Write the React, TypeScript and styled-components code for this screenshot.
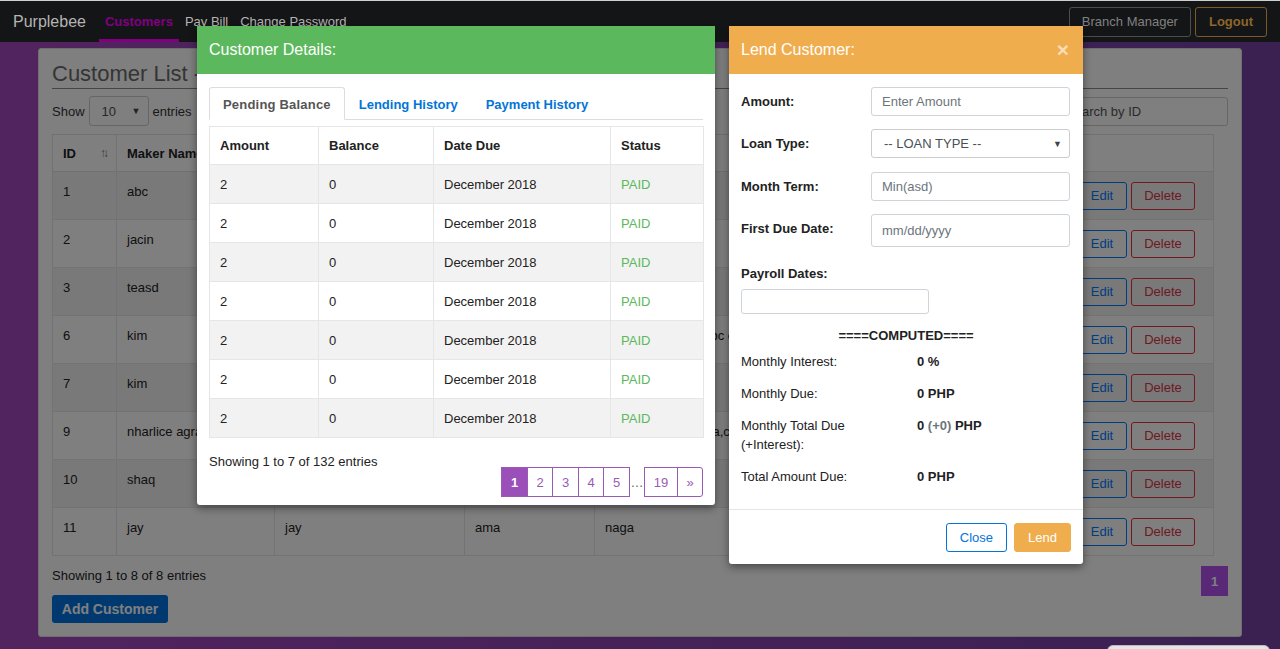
import React from 'react';
import styled, { createGlobalStyle } from 'styled-components';

const GlobalStyle = createGlobalStyle`
  html, body { margin: 0; padding: 0; }
  body {
    font-family: "Liberation Sans", Arial, Helvetica, sans-serif;
    font-size: 13px;
    color: #333;
    overflow: hidden;
  }
  * { box-sizing: border-box; }
`;

const Page = styled.div`
  position: relative;
  width: 1280px;
  height: 649px;
  overflow: hidden;
  background: linear-gradient(90deg, #a448be 0%, #8c45b2 50%, #7442a4 100%);
`;

/* ---------- navbar ---------- */
const Navbar = styled.nav`
  position: relative;
  z-index: 1050;
  height: 42px;
  display: flex;
  align-items: stretch;
  background: #141517;
  border-top: 1px solid #cfcfcf;
  padding: 0 13px;
`;
const Brand = styled.div`
  display: flex;
  align-items: center;
  font-size: 16px;
  color: #b4b4b4;
  margin-right: 13px;
`;
const NavLink = styled.a<{ $active?: boolean }>`
  display: flex;
  align-items: center;
  padding: 3px 6px 0;
  font-size: 13px;
  text-decoration: none;
  color: ${(p) => (p.$active ? '#800080' : '#b4b4b4')};
  font-weight: ${(p) => (p.$active ? 700 : 400)};
  border-bottom: 3px solid ${(p) => (p.$active ? '#800080' : 'transparent')};
`;
const NavRight = styled.div`
  margin-left: auto;
  display: flex;
  align-items: center;
  gap: 4px;
`;
const NavButton = styled.button<{ $tone: 'gray' | 'gold' }>`
  height: 30px;
  padding: 0 ${(p) => (p.$tone === 'gold' ? 13 : 12)}px;
  background: transparent;
  border-radius: 3px;
  font-family: inherit;
  font-size: 13px;
  border: 1px solid ${(p) => (p.$tone === 'gold' ? '#7b5a27' : '#4c4d4f')};
  color: ${(p) => (p.$tone === 'gold' ? '#8d672c' : '#808080')};
  font-weight: ${(p) => (p.$tone === 'gold' ? 700 : 400)};
`;

/* ---------- background page ---------- */
const Container = styled.main`
  padding: 6px 38px 0;
`;
const Card = styled.section`
  background: #fff;
  border: 1px solid #ddd;
  border-radius: 3px;
  padding: 13px;
`;
const CardTitle = styled.h2`
  margin: 0 0 7px;
  font-size: 22px;
  line-height: 24px;
  font-weight: 400;
  color: #6a6a6a;
  padding-bottom: 2px;
  border-bottom: 1px solid #8a8a8a;
`;
const ToolRow = styled.div`
  display: flex;
  align-items: center;
  justify-content: space-between;
  height: 30px;
  margin-bottom: 8px;
  color: #333;
`;
const LengthWrap = styled.div`
  display: flex;
  align-items: center;
  gap: 4px;
`;
const FakeSelect = styled.div<{ $w: number; $h: number }>`
  width: ${(p) => p.$w}px;
  height: ${(p) => p.$h}px;
  display: flex;
  align-items: center;
  justify-content: space-between;
  padding: 0 7px 0 12px;
  border: 1px solid #ccc;
  border-radius: 3px;
  background: #fff;
  color: #495057;
  font-size: 13px;
`;
const Caret = styled.span`
  font-size: 9px;
  color: #444;
`;
const SearchBox = styled.input`
  width: 172px;
  height: 29px;
  border: 1px solid #ccc;
  border-radius: 3px;
  padding: 0 9px;
  font-family: inherit;
  font-size: 13px;
  &::placeholder { color: #555; }
`;
const MainTable = styled.table`
  width: 1161px;
  border-collapse: collapse;
  table-layout: fixed;
  border: 1px solid #ddd;
`;
const MainTh = styled.th`
  height: 37px;
  padding: 0 10px;
  text-align: left;
  font-weight: 700;
  font-size: 13px;
  color: #222;
  border: 1px solid #e2e2e2;
  white-space: nowrap;
  overflow: hidden;
`;
const ThInner = styled.div`
  display: flex;
  align-items: center;
  justify-content: space-between;
`;
const SortIcon = styled.span`
  font-size: 12px;
  color: #777;
  letter-spacing: -3px;
  font-weight: 400;
`;
const MainTr = styled.tr<{ $striped: boolean }>`
  height: 48px;
  background: ${(p) => (p.$striped ? '#f2f2f2' : '#fff')};
`;
const MainTd = styled.td`
  vertical-align: top;
  padding: 11px 10px 0;
  line-height: 17px;
  border: 1px solid #e6e6e6;
  color: #222;
  white-space: nowrap;
  overflow: hidden;
`;
const ActionTd = styled.td`
  vertical-align: middle;
  padding: 0 10px;
  border: 1px solid #e6e6e6;
  white-space: nowrap;
`;
const Actions = styled.div`
  display: flex;
  gap: 4px;
`;
const OutlineBtn = styled.button<{ $color: string; $w: number }>`
  width: ${(p) => p.$w}px;
  height: 28px;
  border: 1px solid ${(p) => p.$color};
  color: ${(p) => p.$color};
  background: transparent;
  border-radius: 3px;
  font-family: inherit;
  font-size: 13px;
  padding: 0;
`;
const CardFooter = styled.div`
  display: flex;
  justify-content: space-between;
  align-items: flex-start;
  margin-top: 10px;
`;
const FooterLeft = styled.div`
  display: flex;
  flex-direction: column;
  align-items: flex-start;
`;
const InfoText = styled.div`
  line-height: 20px;
  color: #222;
`;
const PrimaryBtn = styled.button`
  margin-top: 9px;
  width: 116px;
  height: 28px;
  border: none;
  border-radius: 3px;
  background: #0073de;
  color: #fff;
  font-family: inherit;
  font-weight: 700;
  font-size: 14px;
`;
const MiniPage = styled.div`
  width: 27px;
  height: 30px;
  display: flex;
  align-items: center;
  justify-content: center;
  background: #b250ee;
  color: #fff;
  font-weight: 700;
  font-size: 13px;
`;

const Backdrop = styled.div`
  position: absolute;
  inset: 0;
  z-index: 1040;
  background: rgba(0, 0, 0, 0.5);
`;

/* ---------- modals ---------- */
const Modal = styled.div<{ $left: number; $width: number }>`
  position: absolute;
  z-index: 1060;
  top: 26px;
  left: ${(p) => p.$left}px;
  width: ${(p) => p.$width}px;
  background: #fff;
  border-radius: 0 0 3px 3px;
  box-shadow: 0 3px 9px rgba(0, 0, 0, 0.45);
  display: flex;
  flex-direction: column;
`;
const ModalHeader = styled.div<{ $bg: string }>`
  height: 48px;
  display: flex;
  align-items: center;
  justify-content: space-between;
  padding: 0 12px;
  background: ${(p) => p.$bg};
  color: #fff;
  font-size: 16px;
`;
const CloseX = styled.span`
  font-size: 21px;
  font-weight: 700;
  color: rgba(255, 255, 255, 0.6);
  line-height: 1;
  margin: -2px 2px 0 0;
`;
const LeftBody = styled.div`
  padding: 13px 12px 8px;
`;
const Tabs = styled.div`
  display: flex;
  height: 33px;
  border-bottom: 1px solid #ddd;
`;
const Tab = styled.div<{ $active?: boolean }>`
  display: flex;
  align-items: center;
  padding: 1px 13px 0;
  font-weight: 700;
  font-size: 13px;
  letter-spacing: ${(p) => (p.$active ? 0.2 : 0)}px;
  color: ${(p) => (p.$active ? '#555' : '#0275d8')};
  background: ${(p) => (p.$active ? '#fff' : 'transparent')};
  border: 1px solid ${(p) => (p.$active ? '#ddd' : 'transparent')};
  border-bottom: ${(p) => (p.$active ? '1px solid #fff' : 'none')};
  border-radius: 3px 3px 0 0;
  margin-bottom: ${(p) => (p.$active ? -1 : 0)}px;
`;
const DetailTable = styled.table`
  width: 100%;
  margin-top: 6px;
  border-collapse: collapse;
  table-layout: fixed;
  border: 1px solid #e6e6e6;
`;
const DTh = styled.th`
  height: 38px;
  padding: 0 10px;
  text-align: left;
  font-weight: 700;
  font-size: 13px;
  color: #222;
  border: 1px solid #e6e6e6;
`;
const DTr = styled.tr<{ $striped: boolean }>`
  background: ${(p) => (p.$striped ? '#f2f2f2' : '#fff')};
`;
const DTd = styled.td<{ $paid?: boolean }>`
  height: 39px;
  padding: 0 10px;
  font-size: 13px;
  color: ${(p) => (p.$paid ? '#5cb85c' : '#222')};
  border: 1px solid #e6e6e6;
`;
const DetailFooter = styled.div`
  display: flex;
  justify-content: space-between;
  align-items: flex-start;
`;
const DetailInfo = styled.div`
  margin-top: 15px;
  line-height: 18px;
  color: #222;
`;
const Pager = styled.div`
  display: flex;
  margin-top: 29px;
`;
const PageItem = styled.div<{ $active?: boolean; $w?: number; $last?: boolean }>`
  width: ${(p) => p.$w ?? 26}px;
  height: 30px;
  margin-left: -1px;
  display: flex;
  align-items: center;
  justify-content: center;
  border: 1px solid #9b59b6;
  border-radius: ${(p) => (p.$last ? '0 3px 3px 0' : '0')};
  background: ${(p) => (p.$active ? '#9b4fb8' : '#fff')};
  color: ${(p) => (p.$active ? '#fff' : '#9b59b6')};
  font-weight: ${(p) => (p.$active ? 700 : 400)};
  font-size: 13px;
  position: relative;
  z-index: ${(p) => (p.$active ? 1 : 0)};
`;
const PageGap = styled.div`
  width: 14px;
  height: 30px;
  display: flex;
  align-items: flex-end;
  justify-content: center;
  padding-bottom: 7px;
  color: #666;
  margin-right: 1px;
`;

const RightBody = styled.div`
  padding: 13px 12px 23px;
`;
const FormRow = styled.div<{ $gap?: number }>`
  display: grid;
  grid-template-columns: 130px 199px;
  margin-bottom: ${(p) => p.$gap ?? 13}px;
`;
const FormLabel = styled.label<{ $block?: boolean }>`
  display: block;
  font-weight: 700;
  font-size: 13px;
  line-height: 16px;
  padding-top: ${(p) => (p.$block ? 0 : 7)}px;
  margin-bottom: ${(p) => (p.$block ? 7 : 0)}px;
  color: #222;
`;
const TextInput = styled.input<{ $h?: number; $w?: number }>`
  width: ${(p) => (p.$w ? `${p.$w}px` : '100%')};
  height: ${(p) => p.$h ?? 29}px;
  border: 1px solid #ced4da;
  border-radius: 3px;
  padding: 0 10px;
  font-family: inherit;
  font-size: 13px;
  color: #495057;
  &::placeholder { color: #6c757d; }
`;
const ComputedTitle = styled.div`
  margin-top: 14px;
  text-align: center;
  font-weight: 700;
  line-height: 16px;
  color: #222;
`;
const ComputedList = styled.div`
  margin-top: 8px;
  display: flex;
  flex-direction: column;
  gap: 13px;
`;
const ComputedRow = styled.div`
  display: grid;
  grid-template-columns: 176px 1fr;
  line-height: 19px;
  color: #222;
`;
const ComputedValue = styled.div`
  font-weight: 700;
`;
const Muted = styled.span`
  color: #6c757d;
`;
const ModalFooter = styled.div`
  display: flex;
  justify-content: flex-end;
  gap: 7px;
  padding: 13px 12px 12px;
  border-top: 1px solid #e5e5e5;
`;
const FooterBtn = styled.button<{ $kind: 'outline' | 'warning' }>`
  height: 29px;
  padding: 0 13px;
  border-radius: 3px;
  font-family: inherit;
  font-size: 13px;
  border: 1px solid ${(p) => (p.$kind === 'outline' ? '#0275d8' : '#f0ad4e')};
  background: ${(p) => (p.$kind === 'outline' ? '#fff' : '#f0ad4e')};
  color: ${(p) => (p.$kind === 'outline' ? '#0275d8' : '#fff')};
`;

const CornerTab = styled.div`
  position: absolute;
  z-index: 1070;
  left: 1107px;
  top: 645px;
  width: 163px;
  height: 30px;
  background: #e4e4e4;
  border: 1px solid #bbb;
  border-radius: 6px 6px 0 0;
`;

type Customer = { id: number; maker: string; comaker: string; contact: string; address: string; company: string };

const customers: Customer[] = [
  { id: 1, maker: 'abc', comaker: 'abc', contact: 'abc', address: 'abc', company: 'abc' },
  { id: 2, maker: 'jacin', comaker: 'jacin', contact: 'jacin', address: 'jacin', company: 'jacin' },
  { id: 3, maker: 'teasd', comaker: 'teasd', contact: 'asd', address: 'asd', company: 'asd' },
  { id: 6, maker: 'kim', comaker: 'kim', contact: 'kim', address: 'abc abc abc abc abc c d', company: 'kim' },
  { id: 7, maker: 'kim', comaker: 'kim', contact: 'kim', address: 'kim', company: 'kim' },
  { id: 9, maker: 'nharlice agravante', comaker: 'nharlice', contact: 'agra', address: 'Brgy. Maria Luisa, a,c', company: 'agra' },
  { id: 10, maker: 'shaq', comaker: 'shaq', contact: 'shaq', address: 'shaq', company: 'shaq' },
  { id: 11, maker: 'jay', comaker: 'jay', contact: 'ama', address: 'naga', company: 'jay' },
];

const colWidths = [64, 158, 190, 130, 260, 212, 147];

const balances = Array.from({ length: 7 }, () => ({ amount: '2', balance: '0', due: 'December 2018', status: 'PAID' }));

export default function App() {
  return (
    <Page>
      <GlobalStyle />
      <Navbar>
        <Brand>Purplebee</Brand>
        <NavLink $active>Customers</NavLink>
        <NavLink>Pay Bill</NavLink>
        <NavLink>Change Password</NavLink>
        <NavRight>
          <NavButton $tone="gray">Branch Manager</NavButton>
          <NavButton $tone="gold">Logout</NavButton>
        </NavRight>
      </Navbar>

      <Container>
        <Card>
          <CardTitle>Customer List - Branch</CardTitle>
          <ToolRow>
            <LengthWrap>
              Show
              <FakeSelect $w={60} $h={30}>
                10 <Caret>▼</Caret>
              </FakeSelect>
              entries
            </LengthWrap>
            <SearchBox placeholder="Search by ID" />
          </ToolRow>
          <MainTable>
            <colgroup>
              {colWidths.map((w, i) => (
                <col key={i} style={{ width: w }} />
              ))}
            </colgroup>
            <thead>
              <tr>
                <MainTh>
                  <ThInner>
                    ID <SortIcon>↑↓</SortIcon>
                  </ThInner>
                </MainTh>
                <MainTh>Maker Name</MainTh>
                <MainTh>Co-Maker Name</MainTh>
                <MainTh>Contact</MainTh>
                <MainTh>Address</MainTh>
                <MainTh>Company</MainTh>
                <MainTh></MainTh>
              </tr>
            </thead>
            <tbody>
              {customers.map((c, i) => (
                <MainTr key={c.id} $striped={i % 2 === 0}>
                  <MainTd>{c.id}</MainTd>
                  <MainTd>{c.maker}</MainTd>
                  <MainTd>{c.comaker}</MainTd>
                  <MainTd>{c.contact}</MainTd>
                  <MainTd>{c.address}</MainTd>
                  <MainTd>{c.company}</MainTd>
                  <ActionTd>
                    <Actions>
                      <OutlineBtn $color="#007bff" $w={50}>Edit</OutlineBtn>
                      <OutlineBtn $color="#dc3545" $w={64}>Delete</OutlineBtn>
                    </Actions>
                  </ActionTd>
                </MainTr>
              ))}
            </tbody>
          </MainTable>
          <CardFooter>
            <FooterLeft>
              <InfoText>Showing 1 to 8 of 8 entries</InfoText>
              <PrimaryBtn>Add Customer</PrimaryBtn>
            </FooterLeft>
            <MiniPage>1</MiniPage>
          </CardFooter>
        </Card>
      </Container>

      <Backdrop />

      <Modal $left={197} $width={518}>
        <ModalHeader $bg="#5cb85c">Customer Details:</ModalHeader>
        <LeftBody>
          <Tabs>
            <Tab $active>Pending Balance</Tab>
            <Tab>Lending History</Tab>
            <Tab>Payment History</Tab>
          </Tabs>
          <DetailTable>
            <colgroup>
              <col style={{ width: 109 }} />
              <col style={{ width: 115 }} />
              <col style={{ width: 177 }} />
              <col style={{ width: 93 }} />
            </colgroup>
            <thead>
              <tr>
                <DTh>Amount</DTh>
                <DTh>Balance</DTh>
                <DTh>Date Due</DTh>
                <DTh>Status</DTh>
              </tr>
            </thead>
            <tbody>
              {balances.map((b, i) => (
                <DTr key={i} $striped={i % 2 === 0}>
                  <DTd>{b.amount}</DTd>
                  <DTd>{b.balance}</DTd>
                  <DTd>{b.due}</DTd>
                  <DTd $paid>{b.status}</DTd>
                </DTr>
              ))}
            </tbody>
          </DetailTable>
          <DetailFooter>
            <DetailInfo>Showing 1 to 7 of 132 entries</DetailInfo>
            <Pager>
              <PageItem $active $w={27}>1</PageItem>
              <PageItem>2</PageItem>
              <PageItem $w={27}>3</PageItem>
              <PageItem>4</PageItem>
              <PageItem $w={27}>5</PageItem>
              <PageGap>…</PageGap>
              <PageItem $w={34}>19</PageItem>
              <PageItem $last>»</PageItem>
            </Pager>
          </DetailFooter>
        </LeftBody>
      </Modal>

      <Modal $left={729} $width={354}>
        <ModalHeader $bg="#f0ad4e">
          Lend Customer:
          <CloseX>×</CloseX>
        </ModalHeader>
        <RightBody>
          <FormRow>
            <FormLabel>Amount:</FormLabel>
            <TextInput placeholder="Enter Amount" />
          </FormRow>
          <FormRow $gap={14}>
            <FormLabel>Loan Type:</FormLabel>
            <FakeSelect $w={199} $h={29}>
              -- LOAN TYPE -- <Caret>▼</Caret>
            </FakeSelect>
          </FormRow>
          <FormRow>
            <FormLabel>Month Term:</FormLabel>
            <TextInput placeholder="Min(asd)" />
          </FormRow>
          <FormRow $gap={19}>
            <FormLabel>First Due Date:</FormLabel>
            <TextInput $h={33} placeholder="mm/dd/yyyy" />
          </FormRow>
          <FormLabel $block>Payroll Dates:</FormLabel>
          <TextInput $h={25} $w={188} />
          <ComputedTitle>====COMPUTED====</ComputedTitle>
          <ComputedList>
            <ComputedRow>
              <div>Monthly Interest:</div>
              <ComputedValue>0 %</ComputedValue>
            </ComputedRow>
            <ComputedRow>
              <div>Monthly Due:</div>
              <ComputedValue>0 PHP</ComputedValue>
            </ComputedRow>
            <ComputedRow>
              <div>
                Monthly Total Due
                <br />
                (+Interest):
              </div>
              <ComputedValue>
                0 <Muted>(+0)</Muted> PHP
              </ComputedValue>
            </ComputedRow>
            <ComputedRow>
              <div>Total Amount Due:</div>
              <ComputedValue>0 PHP</ComputedValue>
            </ComputedRow>
          </ComputedList>
        </RightBody>
        <ModalFooter>
          <FooterBtn $kind="outline">Close</FooterBtn>
          <FooterBtn $kind="warning">Lend</FooterBtn>
        </ModalFooter>
      </Modal>

      <CornerTab />
    </Page>
  );
}
